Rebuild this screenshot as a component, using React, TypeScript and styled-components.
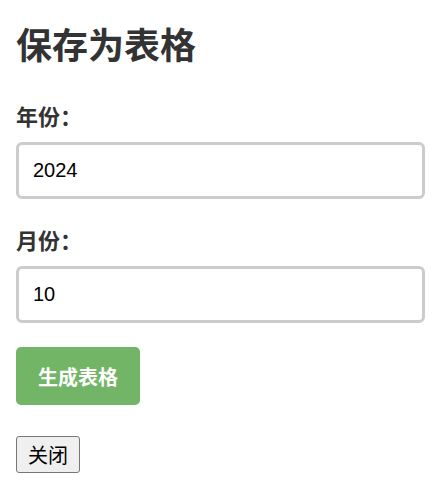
import React from 'react';
import styled, { createGlobalStyle } from 'styled-components';

const GlobalStyle = createGlobalStyle`
	body {
		margin: 0;
		background: #fff;
		font-family: "Liberation Sans", "Noto Sans CJK SC", sans-serif;
	}
`;

const Page = styled.div`
	padding: 16px 22px 16px 16px;
	display: flex;
	flex-direction: column;
	align-items: flex-start;
`;

const Title = styled.h1`
	margin: 7px 0 33px;
	font-size: 36px;
	font-weight: bold;
	color: #333;
	line-height: 48px;
`;

const Field = styled.div`
	display: flex;
	flex-direction: column;
	align-self: stretch;
	margin-bottom: ${(p: { last?: boolean }) => (p.last ? '24px' : '29px')};
`;

const Label = styled.label`
	font-size: 22px;
	font-weight: bold;
	color: #333;
	line-height: 28px;
	margin-bottom: 10px;
`;

const Input = styled.input`
	box-sizing: border-box;
	width: 100%;
	height: 57px;
	padding: 0 14px;
	border: 3px solid #ccc;
	border-radius: 6px;
	font-family: "Liberation Sans", sans-serif;
	font-size: 20px;
	color: #000;
	outline: none;
`;

const SubmitButton = styled.button`
	height: 58px;
	padding: 0 22px;
	margin-bottom: 31px;
	border: none;
	border-radius: 5px;
	background: #73b566;
	color: #fff;
	font-family: "Liberation Sans", "Noto Sans CJK SC", sans-serif;
	font-size: 20px;
	font-weight: bold;
	cursor: pointer;
`;

const CloseButton = styled.button`
	height: 37px;
	padding: 0 11px;
	font-family: "Liberation Sans", "Noto Sans CJK SC", sans-serif;
	font-size: 20px;
	color: #000;
	background: #efefef;
	border: 1px solid #767676;
	border-radius: 3px;
`;

const App: React.FC = () => {
	return (
		<>
			<GlobalStyle />
			<Page>
				<Title>保存为表格</Title>
				<Field>
					<Label htmlFor='year'>年份：</Label>
					<Input id='year' type='text' defaultValue='2024' />
				</Field>
				<Field last>
					<Label htmlFor='month'>月份：</Label>
					<Input id='month' type='text' defaultValue='10' />
				</Field>
				<SubmitButton>生成表格</SubmitButton>
				<CloseButton>关闭</CloseButton>
			</Page>
		</>
	);
};

export default App;
